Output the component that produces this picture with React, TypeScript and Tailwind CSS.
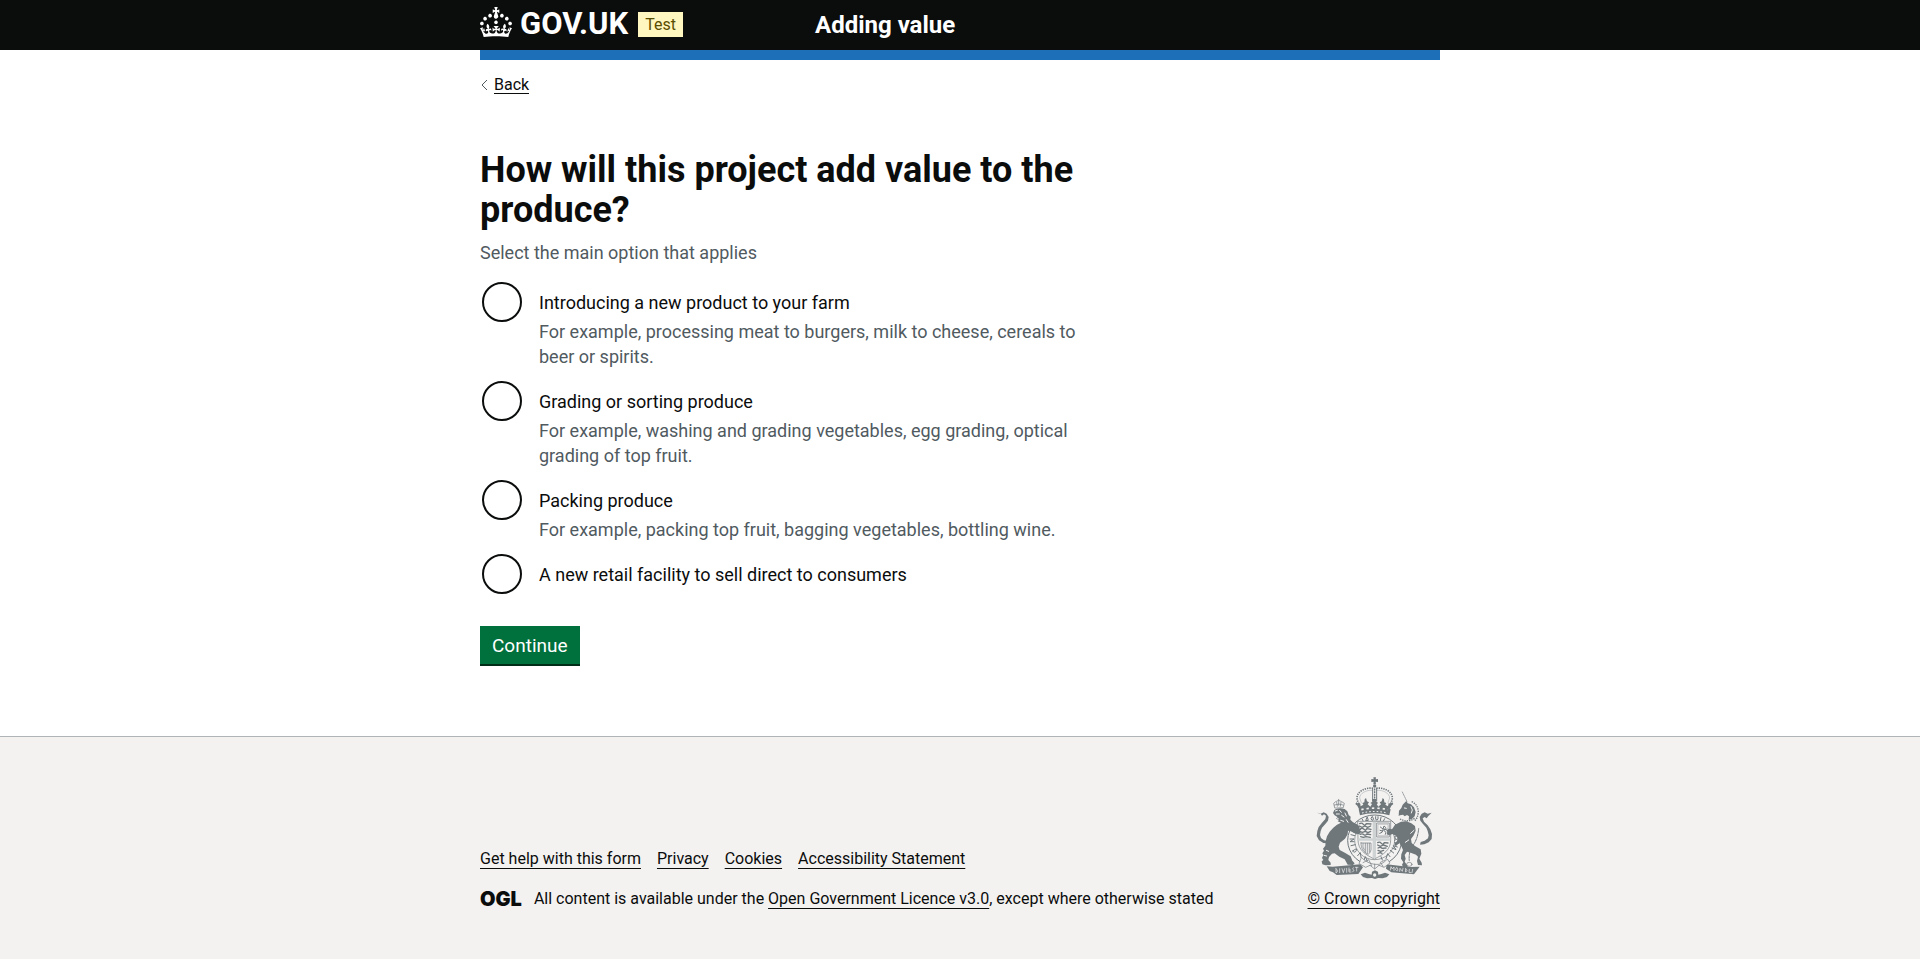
const options = [
  {
    id: "new-product",
    label: "Introducing a new product to your farm",
    hint: "For example, processing meat to burgers, milk to cheese, cereals to beer or spirits.",
  },
  {
    id: "grading",
    label: "Grading or sorting produce",
    hint: "For example, washing and grading vegetables, egg grading, optical grading of top fruit.",
  },
  {
    id: "packing",
    label: "Packing produce",
    hint: "For example, packing top fruit, bagging vegetables, bottling wine.",
  },
  { id: "retail", label: "A new retail facility to sell direct to consumers" },
];

const footerLinks = ["Get help with this form", "Privacy", "Cookies", "Accessibility Statement"];

function Crown() {
  return (
    <svg viewBox="0 0 32 30" className="h-[30px] w-8 fill-white" aria-hidden="true">
      <path d="M22.6 10.4c-1 .4-2-.1-2.4-1-.4-.9.1-2 1-2.4.9-.4 2 .1 2.4 1s-.1 2-1 2.4m-5.9 6.7c-.9.4-2-.1-2.4-1-.4-.9.1-2 1-2.4.9-.4 2 .1 2.4 1s-.1 2-1 2.4m10.8-3.7c-1 .4-2-.1-2.4-1-.4-.9.1-2 1-2.4.9-.4 2 .1 2.4 1s0 2-1 2.4m3.3 4.8c-1 .4-2-.1-2.4-1-.4-.9.1-2 1-2.4.9-.4 2 .1 2.4 1s-.1 2-1 2.4M17 4.7l2.3 1.2V2.5l-2.3.7-.2-.2.9-3h-3.4l.9 3-.2.2c-.1.1-2.3-.7-2.3-.7v3.4L15 4.7c.1.1.1.2.2.2l-1.3 4c-.1.2-.1.4-.1.6 0 1.1.8 2 1.9 2.2h.7c1-.2 1.9-1.1 1.9-2.1 0-.2 0-.4-.1-.6l-1.3-4c-.1-.2 0-.2.1-.3m-7.6 5.7c.9.4 2-.1 2.4-1 .4-.9-.1-2-1-2.4-.9-.4-2 .1-2.4 1s0 2 1 2.4m-5 3c.9.4 2-.1 2.4-1 .4-.9-.1-2-1-2.4-.9-.4-2 .1-2.4 1s.1 2 1 2.4m-3.2 4.8c.9.4 2-.1 2.4-1 .4-.9-.1-2-1-2.4-.9-.4-2 .1-2.4 1s0 2 1 2.4m14.8 11c4.4 0 8.6.3 12.3.8 1.1-4.5 2.4-7 3.7-8.8l-2.5-.9c.2 1.3.3 1.9 0 2.7-.4-.4-.8-1.1-1.1-2.3l-1.2 4c.7-.5 1.3-.8 2-.9-1.1 2.5-2.6 3.1-3.5 3-1.1-.2-1.7-1.2-1.5-2.1.3-1.2 1.5-1.5 2.1-.1 1.1-2.3-.8-3-2-2.3 1.9-1.9 2.1-3.5.6-5.6-2.1 1.6-2.1 3.2-1.2 5.5-1.2-1.4-3.2-.6-2.5 1.6.9-1.4 2.1-.5 1.9.8-.2 1.1-1.7 2.1-3.5 1.9-2.7-.2-2.9-2.1-2.9-3.6.7-.1 1.9.5 2.9 1.9l.4-4.3c-1.1 1.1-2.1 1.4-3.2 1.4.4-1.2 2.1-3 2.1-3h-5.4s1.7 1.9 2.1 3c-1.1 0-2.1-.2-3.2-1.4l.4 4.3c1-1.4 2.2-2 2.9-1.9-.1 1.5-.2 3.4-2.9 3.6-1.9.2-3.4-.8-3.5-1.9-.2-1.3 1-2.2 1.9-.8.7-2.3-1.2-3-2.5-1.6.9-2.2.9-3.9-1.2-5.5-1.5 2-1.3 3.7.6 5.6-1.2-.7-3.1 0-2 2.3.6-1.4 1.8-1.1 2.1.1.2.9-.3 1.9-1.5 2.1-.9.2-2.4-.5-3.5-3 .6 0 1.2.3 2 .9l-1.2-4c-.3 1.1-.7 1.9-1.1 2.3-.3-.8-.2-1.4 0-2.7l-2.9.9C1.3 23 2.6 25.5 3.7 30c3.7-.5 7.9-.8 12.3-.8" />
    </svg>
  );
}

function RoyalArms() {
  return (
    <svg viewBox="66 50 375 306" className="h-[102px] w-[125px]" aria-hidden="true" fill="none" stroke="#6f777b" strokeLinecap="round" strokeLinejoin="round">
      {/* crown */}
      <path fill="#6f777b" stroke="none" d="M253 51h8l-1 6 7-1v9l-7-1 1 8h-8l1-8-7 1v-9l7 1z" />
      <circle cx="257" cy="77" r="5" fill="#6f777b" stroke="none" />
      <path strokeWidth="5" strokeDasharray="4 3" strokeLinecap="butt" d="M252 84c-22-4-48 10-48 28 0 9 4 15 8 22M262 84c22-4 48 10 48 28 0 9-4 15-8 22" />
      <path strokeWidth="1" d="M250 90c-18-2-38 9-38 23l5 14M264 90c18-2 38 9 38 23l-5 14" />
      <path strokeWidth="3" d="M251 84v38M263 84v38" />
      <path strokeWidth="4" strokeDasharray="3 5" d="M257 86v36" />
      <path fill="#6f777b" stroke="none" d="M211 148l-6-12-6-5 3-5 6 4 5-2 2 10 8-5-3-5 6-2 1-9 4-4 3 10 6 3-4 6 8 7 5-8-5-3 6-4v-8h12v8l6 4-5 3 5 8 8-7-4-6 6-3 3-10 4 4 1 9 6 2-3 5 8 5 2-10 5 2 6-4 3 5-6 5-6 12z" />
      <path fill="#6f777b" stroke="none" d="M209 147c30-9 66-9 96 0l-4 18c-26-8-62-8-88 0z" />
      <path stroke="#f3f2f1" strokeWidth="5" strokeDasharray="7 9" strokeLinecap="butt" d="M217 148c25-6 55-6 80 0" />
      <path stroke="#f3f2f1" strokeWidth="3" strokeDasharray="5 6" strokeLinecap="butt" d="M219 158c24-6 52-6 76 0" />
      {/* garter */}
      <ellipse cx="257" cy="240" rx="81" ry="76" fill="#f3f2f1" strokeWidth="3" />
      <ellipse cx="257" cy="240" rx="60" ry="58" strokeWidth="2" />
      <path strokeWidth="3" d="M235 171l3 9-7 1zM248 170q-5 6 1 10l5-3-3-7zM260 169v8q5 5 7-1v-7M276 171l-2 10M287 175l-6 11M220 177l4 9M194 205l9 7-11 2 10 6M186 223l11 3M183 236h12l-12 8h12M186 256l13-3M191 272q7 8 11-2t-11 2M206 286l8-9 2 14M225 299l4-10 6 13M319 205l-8 6 11 2-9 7M328 226l-11 2 3 10 10-4M328 249l-11-2M325 260l-12-4 8 12-12-5M314 278l-10-8M303 289l-7-9-5 15M280 299l-4-10" />
      {/* shield */}
      <path fill="#f3f2f1" strokeWidth="2" d="M207 183h98v56c0 30-22 44-49 57-27-13-49-27-49-57z" />
      <path fill="#d0d3d3" stroke="none" d="M251 184h10v108l-5 3-5-3zM208 234h96v7h-96z" />
      <path strokeWidth="4" d="M212 190q6-4 11 2t9-2l14 1M211 197l8 4 9-4 8 4 9-4M213 206q7-4 12 1t8-2l13 2M212 213l8 3 9-3 8 4 8-4M213 222q7-3 12 1t8-2l12 2M215 229l8 2 8-2 13 2" />
      <path strokeWidth="2" d="M264 188h37v42h-37z" />
      <path strokeWidth="1" d="M268 192h29v34h-29z" />
      <path strokeWidth="3" d="M274 200l8 6 3-9 5 4-4 8 8-3M283 206l-4 10-7 3M284 210l7 6-2 6M273 210l7 2" />
      <path strokeWidth="2" d="M216 248h30v21q-2 8-8 13c-14-6-22-17-22-34zM222 249q-3 12 4 20M229 249v27M235 249v30M241 249v27" />
      <path strokeWidth="4" d="M266 247q6-4 11 2t9-2l11 1M266 254l8 4 9-4 12 4M267 263q7-4 12 1l12-1M267 270l8 3 9-3M267 279l7-2 5 2" />
      {/* lion */}
      <g fill="#6f777b" stroke="none">
        <path d="M132 158l4-9 7-4 12-1 12 2 8 7 4 11 6 5-1 9 8 8 12 6 9 8-3 4 7 3-5 6 4 5-7 4-12-3-12-6-8-2-1 11-8 13-15 12-4 12 3 10 17 9 16 10 5 13 7 8-5 5-16-1-4-7-5-9-16-8-14-10-8 1-9 10-2 9 7 8 0 7-15 1-10-3-2-9 5-4-4-6 4-9-3-5 5-8-3-6 7-9 1-14 4-14 8-14 11-12 11-9 12-6-10-4 4-4-9-4 4-5-8-5z" />
        <path d="M83 157l12 3 9-4 9 4 6 10-2 11-8 10-10 11-4 10-2 12 3 9 9 7 11 2-1 7-12-1-13-8-7-13 2-15 4-12 10-13 10-11 2-10-6-4-6 4-5-7z" />
      </g>
      <path strokeWidth="2" d="M137 142l-3-13 6-5 9-4 9 4 8 5-3 12zM136 134q13-6 27 0M149 117v18M143 126l2 12M156 126l-2 12" />
      <path stroke="#f3f2f1" strokeWidth="3" d="M139 152l6-2M142 161l9 0M152 150l5 6M140 171l8 4M158 165l7 5M168 158l4 9M155 180l9 3M172 178l5 8M105 285l8 2M112 270l7 3" />
      {/* unicorn */}
      <g fill="#6f777b" stroke="none">
        <path d="M330 151l7-8 4-10 8-8 3-3 4 7 10 3 9 9 5 14-3 13-8 8-10 3 1-11-6-4-7 4-5-5-9 2-4 2z" />
        <path d="M318 193l18-9 16-1 15 6 11 8 2 14-6 14-8 11 2 12 10 9 17 10 2 13-6 15 7 12 1 8-12-1-3-12 3-13-6-6-14-5-13-4-7 10 3 11-3 9 7 10 4 9-15-1-4-9 4-7-7-11 1-13 5-13-4-9-7-12-4-13-6-9-11-5-9 4-8-3 2-8 14-7z" />
        <path d="M428 157l-12 3-9-4-9 4-6 10 2 11 8 10 10 11 4 10 3 13-2 9-10 7-12 4-2 8 13-1 13-6 9-10 1-15-5-14-8-12-11-11-4-10 6-4 6 4 5-7z" />
        <path d="M316 209l-16-4-9 6 9 7 17 1 11-4zM327 230l-3 12-8 9 4 7 10-9 8-11z" />
      </g>
      <path strokeWidth="2" strokeDasharray="5 3" d="M340 95l14 29" />
      <path strokeWidth="4" strokeDasharray="4 3" strokeLinecap="butt" d="M368 124q19 8 20 32-2 18-12 27M333 176q22 12 44-2" />
      <path stroke="#f3f2f1" strokeWidth="3" d="M346 143l6 1M366 139l4 10-3 9M375 210l-10 9M349 246l10-7" />
      <path strokeWidth="3" strokeDasharray="5 3" d="M389 205q-3 31-17 50t-11 48" />
      <ellipse cx="361" cy="312" rx="8" ry="6" strokeWidth="2" />
      {/* motto scroll */}
      <path fill="#6f777b" stroke="none" d="M113 318l18 1 83-7 8 9-14 20-65 3-11-8-10-4zM293 312l68 8 31-1-8 11-9 12-68-6-16-11z" />
      <path stroke="#f3f2f1" strokeWidth="2" d="M141 325v13q9-5 0-13M152 325v12M159 325l4 12 4-12M173 324v12M180 323v12h6M180 329h5M194 322q-7 3-1 6t-2 6M203 321v11M199 321h8M304 329l2-10 4 7 5-6v11M322 322q-6 7 1 9t1-9M332 333l1-9 7 9 2-9M350 325l-1 10q10-3 1-10M361 327l-1 9 6 1M371 327l-2 10" />
      <path fill="#f3f2f1" strokeWidth="2" d="M218 292q16 17 39 20t38-16l8 12-18 13-15-6-13 11-14-11-13 6-19-11z" />
      <path strokeWidth="2" d="M222 307l17-9 9 18M282 318l-8-12 15-7M257 311v14" />
      <path fill="#6f777b" stroke="none" d="M215 342l13-5 11 4 9 2 1-9 9-4 9 4 1 9 9-2 11-4 13 5-7 8-13 4-14-1-9 3-9-3-15 1-12-4z" />
      <circle cx="257" cy="344" r="5" fill="#f3f2f1" stroke="none" />
    </svg>
  );
}

const link = "underline decoration-1 underline-offset-4";

export default function App() {
  return (
    <div className="flex min-h-screen flex-col bg-white font-[Roboto,'Noto_Sans',sans-serif] text-[#0b0c0c]">
      <header className="bg-[#0b0c0c] text-white">
        <div className="mx-auto grid h-[50px] max-w-[960px] grid-cols-[335px_1fr] items-center">
          <div className="flex items-start self-start">
            <a href="#" className="flex items-start gap-2 pt-[7px]" aria-label="GOV.UK">
              <Crown />
              <span className="text-[31px] leading-[34px] font-bold">GOV.UK</span>
            </a>
            <strong className="mt-3 ml-2.5 bg-[#fff7bf] px-[7px] text-base leading-[25px] font-normal text-[#594d00]">
              Test
            </strong>
          </div>
          <a href="#" className="text-2xl leading-[30px] font-bold">
            Adding value
          </a>
        </div>
      </header>
      <div className="mx-auto h-2.5 w-full max-w-[960px] bg-[#1d70b8]" />

      <div className="mx-auto w-full max-w-[960px] flex-1 pt-4">
        <a href="#" className="flex w-fit items-center gap-1.5 text-base">
          <svg viewBox="0 0 8 12" className="h-3 w-2" aria-hidden="true" fill="none" stroke="#505a5f">
            <path d="M7 1 2 6l5 5" />
          </svg>
          <span className="border-b border-[#0b0c0c] leading-[17px]">Back</span>
        </a>
        <main className="max-w-[630px] pt-14 pb-[68px]">
          <form onSubmit={(e) => e.preventDefault()}>
            <fieldset aria-describedby="value-hint">
              <legend>
                <h1 className="text-4xl leading-10 font-bold">How will this project add value to the produce?</h1>
              </legend>
              <div id="value-hint" className="mt-2.5 mb-[15px] text-lg leading-[25px] text-[#505a5f]">
                Select the main option that applies
              </div>
              <div className="flex flex-col gap-2.5">
                {options.map((o) => (
                  <div key={o.id} className="grid grid-cols-[44px_1fr] gap-x-[15px]">
                    <input
                      type="radio"
                      name="value"
                      id={o.id}
                      className="m-0.5 size-10 appearance-none rounded-full border-2 border-[#0b0c0c] bg-white checked:border-[12px]"
                    />
                    <label htmlFor={o.id} className="self-center text-lg leading-[25px]">
                      {o.label}
                    </label>
                    {o.hint && (
                      <div className="col-start-2 -mt-[5px] text-lg leading-[25px] text-[#505a5f]">{o.hint}</div>
                    )}
                  </div>
                ))}
              </div>
            </fieldset>
            <button
              type="submit"
              className="mt-[30px] bg-[#00703c] px-3 pt-2 pb-[7px] text-[19px] leading-[23px] text-white shadow-[0_2px_0_#002d18]"
            >
              Continue
            </button>
          </form>
        </main>
      </div>

      <footer className="border-t border-[#b1b4b6] bg-[#f3f2f1] pt-10 pb-[50px] text-base leading-5">
        <div className="mx-auto flex max-w-[960px] items-end justify-between">
          <div>
            <ul className="mb-5 flex gap-4">
              {footerLinks.map((t) => (
                <li key={t}>
                  <a href="#" className={link}>
                    {t}
                  </a>
                </li>
              ))}
            </ul>
            <div className="flex items-center gap-3">
              <span className="font-[Inter,sans-serif] text-xl leading-5 font-black">OGL</span>
              <span>
                All content is available under the{" "}
                <a href="#" className={link}>
                  Open Government Licence v3.0
                </a>
                , except where otherwise stated
              </span>
            </div>
          </div>
          <a href="#" className="flex flex-col items-center gap-2.5 underline decoration-1 underline-offset-4">
            <RoyalArms />
            <span>© Crown copyright</span>
          </a>
        </div>
      </footer>
    </div>
  );
}
